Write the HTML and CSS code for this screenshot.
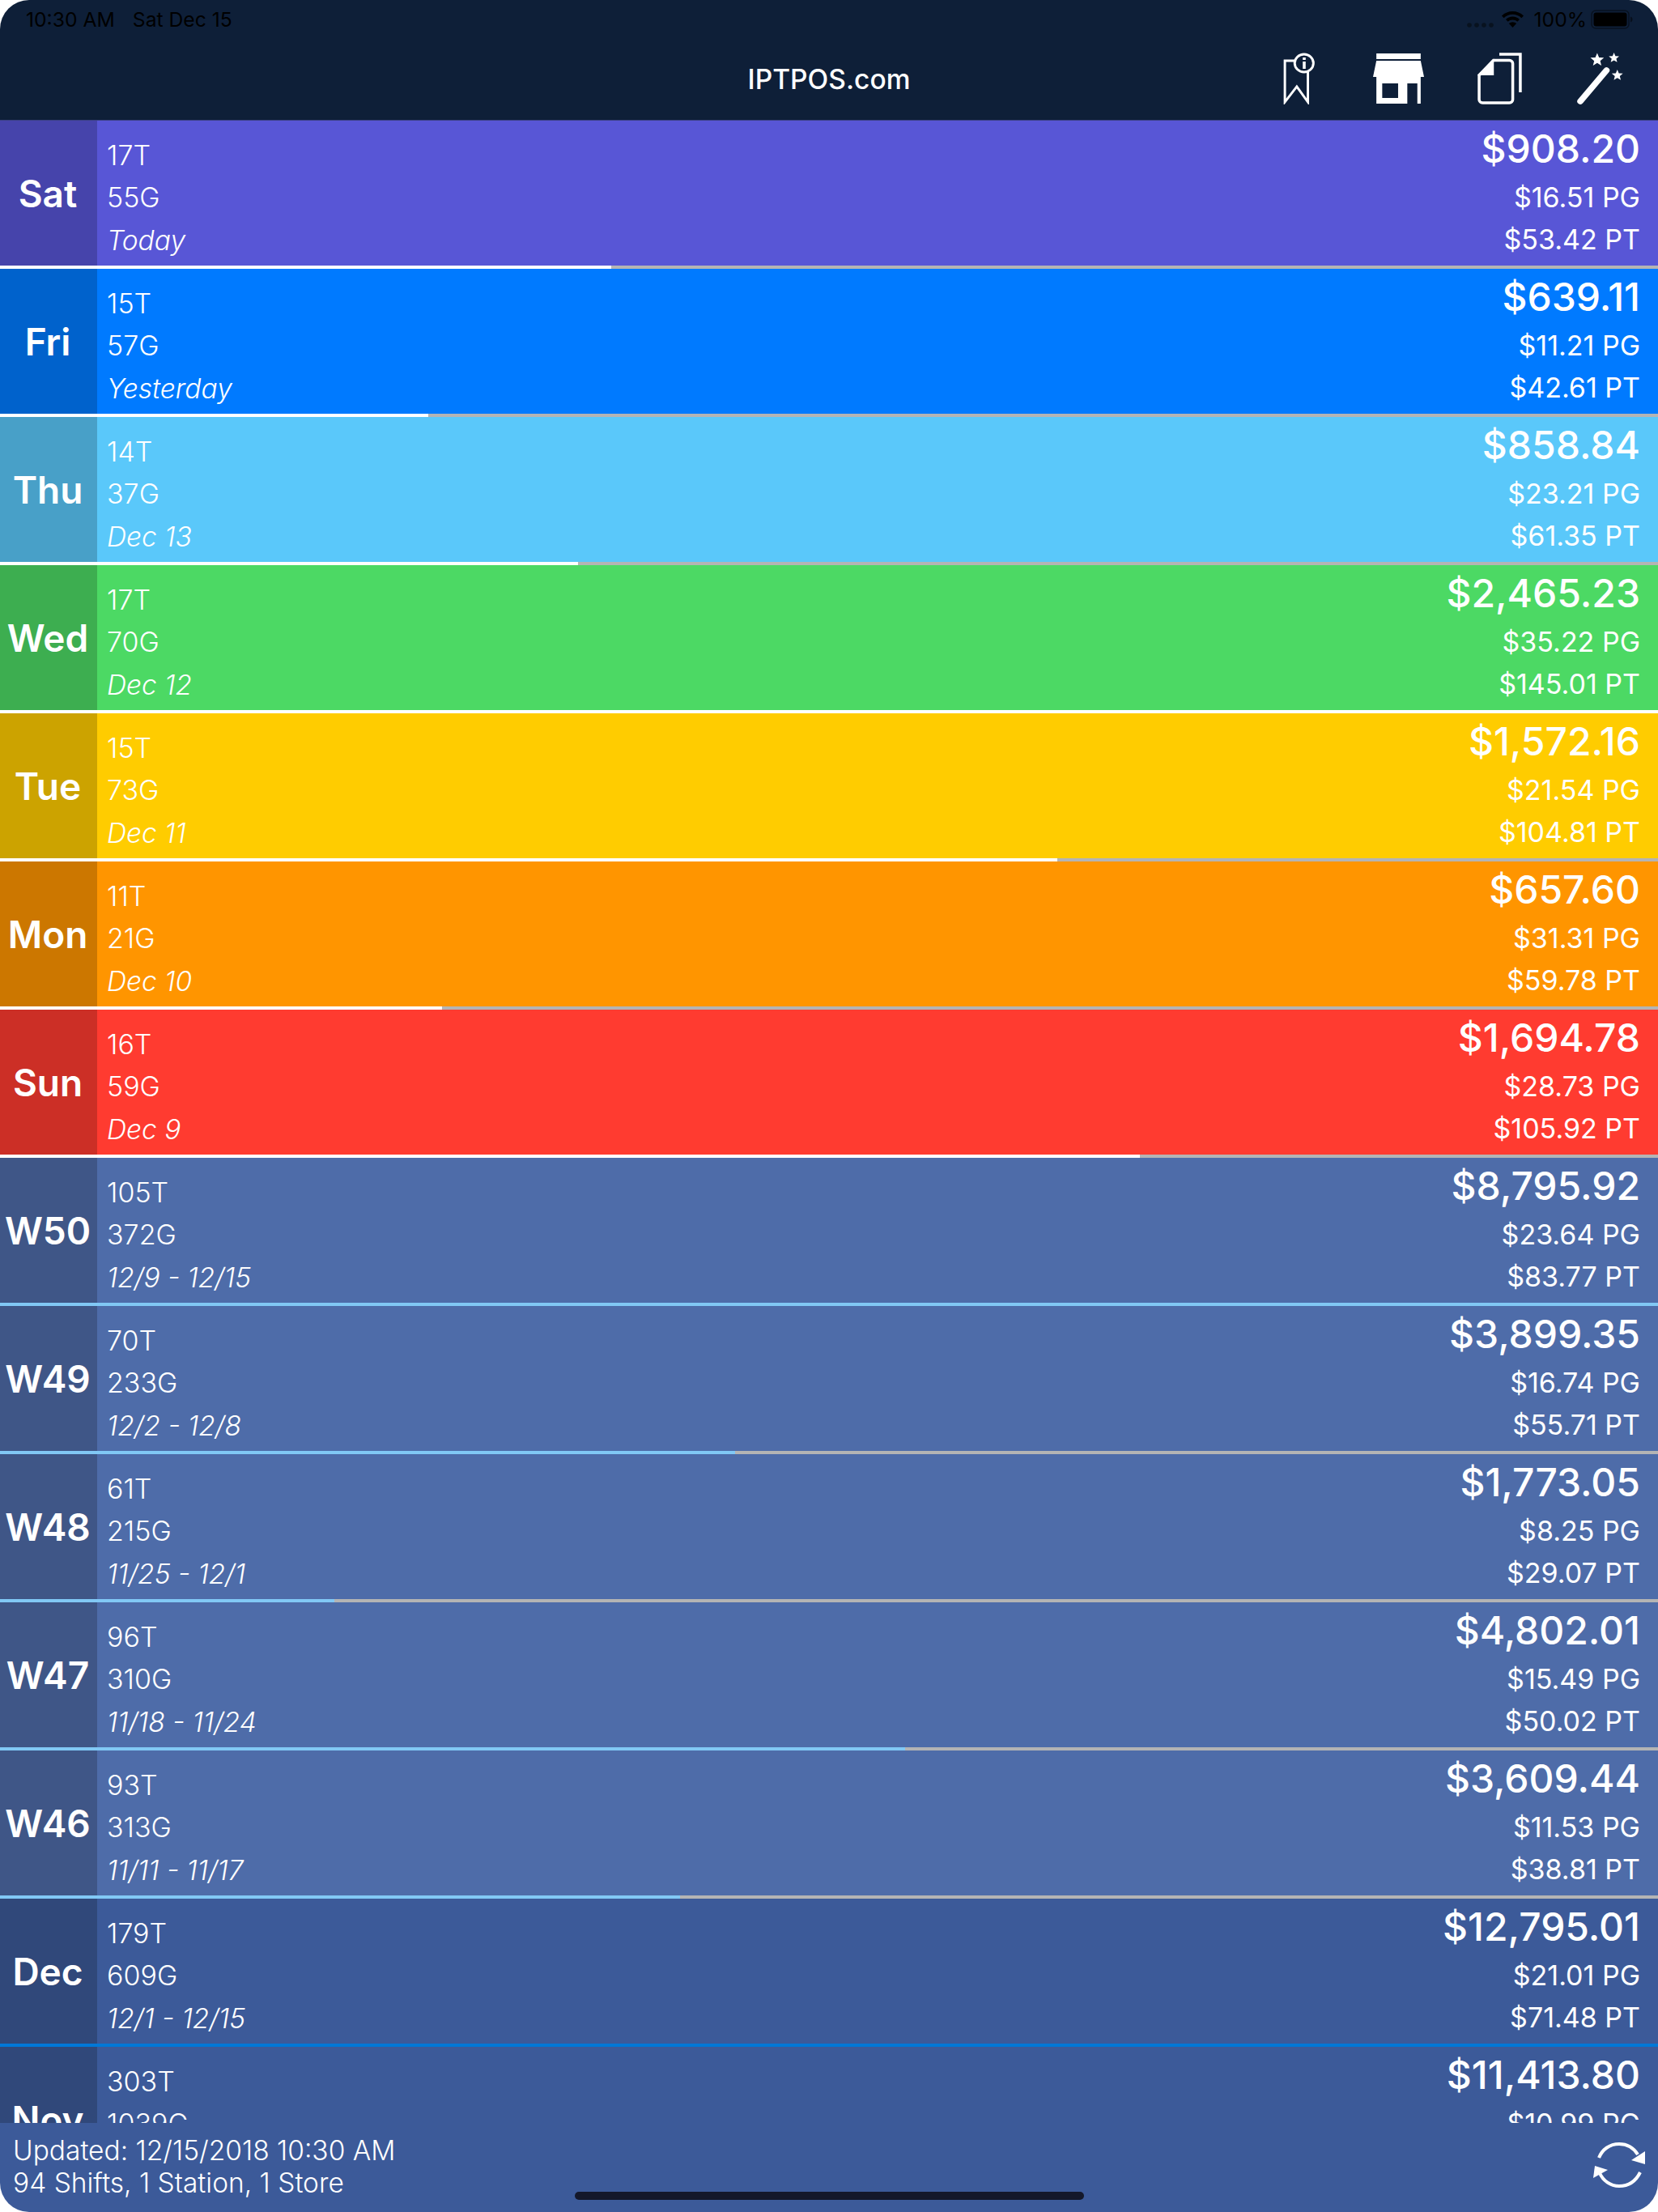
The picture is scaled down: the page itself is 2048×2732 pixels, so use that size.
FILE: index.html
```html
<!DOCTYPE html>
<html>
<head>
    <meta charset="UTF-8">
    <title>IPTPOS.com</title>
    <link rel="stylesheet" href="styles.css">
</head>
<body>
<div class="app">
    <div class="top">
        <div class="status">
            <span class="status-time">10:30 AM</span>
            <span class="status-date">Sat Dec 15</span>
            <span class="status-right">
                <svg class="status-dots" width="33" height="6" viewBox="0 0 33 6"><circle cx="3" cy="3" r="2.800"/><circle cx="12" cy="3" r="2.800"/><circle cx="21" cy="3" r="2.800"/><circle cx="30" cy="3" r="2.800"/></svg>
                <svg width="27" height="20" viewBox="0 0 27 20"><path d="M13.5 0C8.3 0 3.7 2 0 5.400l2.600 2.800C5.500 5.500 9.300 3.800 13.500 3.800s8 1.700 10.900 4.400L27 5.400C23.300 2 18.700 0 13.500 0z"/><path d="M13.500 6.600c-3.300 0-6.300 1.300-8.500 3.400l2.700 2.800c1.500-1.400 3.500-2.300 5.800-2.300s4.300.9 5.800 2.300L22 10c-2.200-2.100-5.200-3.400-8.500-3.400z"/><path d="M13.500 13.200c-1.800 0-3.400.7-4.600 1.800l4.600 5 4.600-5c-1.200-1.100-2.800-1.800-4.600-1.800z"/></svg>
                <span class="status-pct">100%</span>
                <svg width="52" height="24" viewBox="0 0 52 24"><rect x="1" y="1" width="46" height="22" rx="5" fill="none" stroke="#000" stroke-opacity=".45" stroke-width="1.500"/><rect x="3.500" y="3.500" width="41" height="17" rx="3"/><path d="M49 8.500c1.500.4 2.500 1.800 2.500 3.500s-1 3.100-2.500 3.500z" fill-opacity=".5"/></svg>
            </span>
        </div>
        <div class="nav">
            <div></div>
            <div class="nav-title">IPTPOS.com</div>
            <div class="nav-icons">
                <svg class="icon-bookmark" width="40" height="64" viewBox="0 0 38 64" preserveAspectRatio="none" fill="none" stroke="#fff" stroke-width="2.800">
                    <path d="M15 10H2v51l14-19 13 19V24"/>
                    <circle cx="24.500" cy="13" r="11"/>
                    <rect class="solid" x="23" y="11" width="3.400" height="9"/>
                    <rect class="solid" x="23" y="6" width="3.400" height="3"/>
                </svg>
                <svg class="icon-store" width="63" height="63" viewBox="0 0 61 63" preserveAspectRatio="none">
                    <rect x="4" y="1" width="53" height="7" fill="#fff"/>
                    <path fill="#fff" fill-rule="evenodd" d="M4 10H57L61 30H57V63H4V30H0zM11 38V56H30V38z"/>
                    <rect x="41" y="38" width="12" height="25" fill="#0e1f38"/>
                </svg>
                <svg class="icon-doc" width="55" height="64" viewBox="0 0 53 64" preserveAspectRatio="none" fill="none" stroke="#fff" stroke-width="3.400">
                    <path d="M26 2H51V49"/>
                    <path d="M19 9.500H38a4 4 0 0 1 4 4V58a4 4 0 0 1-4 4H6a4 4 0 0 1-4-4V28z"/>
                    <path d="M18.500 10V27H2z" fill="#fff" stroke-width="2"/>
                </svg>
                <svg class="icon-wand" width="58" height="64" viewBox="0 0 56 64" preserveAspectRatio="none">
                    <defs><polygon id="star" points="0,-1 .26,-.36 .95,-.31 .42,.14 .59,.81 0,.45 -.59,.81 -.42,.14 -.95,-.31 -.26,-.36"/></defs>
                    <path d="M5 60L36 22" stroke="#fff" stroke-width="7.500" stroke-linecap="round"/>
                    <use href="#star" fill="#fff" transform="translate(25 9) scale(8.500)"/>
                    <use href="#star" fill="#fff" transform="translate(45 6.500) scale(6.500)"/>
                    <use href="#star" fill="#fff" transform="translate(49 28) scale(7)"/>
                </svg>
            </div>
        </div>
    </div>

    <div class="list">
        <div class="row c-purple">
            <div class="row-label">Sat</div>
            <div class="row-left"><div>17T</div><div>55G</div><div class="note">Today</div></div>
            <div class="row-right"><div class="total">$908.20</div><div>$16.51 PG</div><div>$53.42 PT</div></div>
            <div class="bar"><div class="fill" style="width: 755px"></div></div>
        </div>
        <div class="row c-blue">
            <div class="row-label">Fri</div>
            <div class="row-left"><div>15T</div><div>57G</div><div class="note">Yesterday</div></div>
            <div class="row-right"><div class="total">$639.11</div><div>$11.21 PG</div><div>$42.61 PT</div></div>
            <div class="bar"><div class="fill" style="width: 529px"></div></div>
        </div>
        <div class="row c-sky">
            <div class="row-label">Thu</div>
            <div class="row-left"><div>14T</div><div>37G</div><div class="note">Dec 13</div></div>
            <div class="row-right"><div class="total">$858.84</div><div>$23.21 PG</div><div>$61.35 PT</div></div>
            <div class="bar"><div class="fill" style="width: 714px"></div></div>
        </div>
        <div class="row c-green">
            <div class="row-label">Wed</div>
            <div class="row-left"><div>17T</div><div>70G</div><div class="note">Dec 12</div></div>
            <div class="row-right"><div class="total">$2,465.23</div><div>$35.22 PG</div><div>$145.01 PT</div></div>
            <div class="bar"><div class="fill" style="width: 2048px"></div></div>
        </div>
        <div class="row c-yellow">
            <div class="row-label">Tue</div>
            <div class="row-left"><div>15T</div><div>73G</div><div class="note">Dec 11</div></div>
            <div class="row-right"><div class="total">$1,572.16</div><div>$21.54 PG</div><div>$104.81 PT</div></div>
            <div class="bar"><div class="fill" style="width: 1306px"></div></div>
        </div>
        <div class="row c-orange">
            <div class="row-label">Mon</div>
            <div class="row-left"><div>11T</div><div>21G</div><div class="note">Dec 10</div></div>
            <div class="row-right"><div class="total">$657.60</div><div>$31.31 PG</div><div>$59.78 PT</div></div>
            <div class="bar"><div class="fill" style="width: 546px"></div></div>
        </div>
        <div class="row c-red">
            <div class="row-label">Sun</div>
            <div class="row-left"><div>16T</div><div>59G</div><div class="note">Dec 9</div></div>
            <div class="row-right"><div class="total">$1,694.78</div><div>$28.73 PG</div><div>$105.92 PT</div></div>
            <div class="bar"><div class="fill" style="width: 1408px"></div></div>
        </div>
        <div class="row c-week">
            <div class="row-label">W50</div>
            <div class="row-left"><div>105T</div><div>372G</div><div class="note">12/9 - 12/15</div></div>
            <div class="row-right"><div class="total">$8,795.92</div><div>$23.64 PG</div><div>$83.77 PT</div></div>
            <div class="bar"><div class="fill" style="width: 2048px"></div></div>
        </div>
        <div class="row c-week">
            <div class="row-label">W49</div>
            <div class="row-left"><div>70T</div><div>233G</div><div class="note">12/2 - 12/8</div></div>
            <div class="row-right"><div class="total">$3,899.35</div><div>$16.74 PG</div><div>$55.71 PT</div></div>
            <div class="bar"><div class="fill" style="width: 908px"></div></div>
        </div>
        <div class="row c-week">
            <div class="row-label">W48</div>
            <div class="row-left"><div>61T</div><div>215G</div><div class="note">11/25 - 12/1</div></div>
            <div class="row-right"><div class="total">$1,773.05</div><div>$8.25 PG</div><div>$29.07 PT</div></div>
            <div class="bar"><div class="fill" style="width: 413px"></div></div>
        </div>
        <div class="row c-week">
            <div class="row-label">W47</div>
            <div class="row-left"><div>96T</div><div>310G</div><div class="note">11/18 - 11/24</div></div>
            <div class="row-right"><div class="total">$4,802.01</div><div>$15.49 PG</div><div>$50.02 PT</div></div>
            <div class="bar"><div class="fill" style="width: 1118px"></div></div>
        </div>
        <div class="row c-week">
            <div class="row-label">W46</div>
            <div class="row-left"><div>93T</div><div>313G</div><div class="note">11/11 - 11/17</div></div>
            <div class="row-right"><div class="total">$3,609.44</div><div>$11.53 PG</div><div>$38.81 PT</div></div>
            <div class="bar"><div class="fill" style="width: 840px"></div></div>
        </div>
        <div class="row c-month">
            <div class="row-label">Dec</div>
            <div class="row-left"><div>179T</div><div>609G</div><div class="note">12/1 - 12/15</div></div>
            <div class="row-right"><div class="total">$12,795.01</div><div>$21.01 PG</div><div>$71.48 PT</div></div>
            <div class="bar"><div class="fill" style="width: 2048px"></div></div>
        </div>
        <div class="row c-month">
            <div class="row-label">Nov</div>
            <div class="row-left"><div>303T</div><div>1039G</div><div class="note">11/1 - 11/30</div></div>
            <div class="row-right"><div class="total">$11,413.80</div><div>$10.99 PG</div><div>$37.67 PT</div></div>
            <div class="bar"><div class="fill" style="width: 2048px"></div></div>
        </div>
    </div>

    <div class="footer">
        <div class="footer-text">
            <div>Updated: 12/15/2018 10:30 AM</div>
            <div>94 Shifts, 1 Station, 1 Store</div>
        </div>
        <svg class="refresh" width="64" height="56" viewBox="0 0 64 56" fill="none" stroke="#fff" stroke-width="4">
            <path d="M7 19C11 9 20 2 32 2c10 0 18 5 23 13"/>
            <path d="M58 37C53 47 44 54 32 54 21 54 12 47 8 38"/>
            <polygon points="64,11 64,27 47,22" fill="#fff" stroke="none"/>
            <polygon points="0,44 2,29 18,34" fill="#fff" stroke="none"/>
        </svg>
        <div class="home-bar"></div>
    </div>
</div>
</body>
</html>
```

FILE: styles.css
```css
html, body { margin: 0; padding: 0; background: #fff; }
body { font-family: Inter, "Liberation Sans", sans-serif; color: #fff; }

.app { position: relative; width: 2048px; height: 2732px; display: flex; flex-direction: column; overflow: hidden; border-radius: 36px; }

.top { height: 148px; flex: none; background: #0e1f38; border-bottom: 1px solid #3a3f80; }
.status { height: 48px; display: flex; align-items: center; padding: 0 31px 0 32px; font-size: 24.700px; color: #000; }
.status-time { margin-right: 22px; }
.status-right { margin-left: auto; display: flex; align-items: center; }
.status-right svg { display: block; }
.status-dots { margin: 14px 10px 0 0; fill: #08121f; }
.status-pct { margin: 0 5px 0 13px; }

.nav { height: 100px; display: grid; grid-template-columns: 1fr auto 1fr; }
.nav-title { font-size: 33.500px; font-weight: 500; line-height: 100px; }
.nav-icons { display: flex; justify-content: flex-end; padding: 17px 43px 0 0; }
.nav-icons svg { display: block; }
.solid { fill: #fff; stroke: none; }
.icon-bookmark { margin-right: 71px; }
.icon-store { margin-right: 66px; }
.icon-doc { margin-right: 67px; }

.list { flex: 1; min-height: 0; overflow: hidden; }

.row { position: relative; height: 179px; padding-bottom: 4px; display: flex; background: var(--bg); }
.row-label { width: 118px; padding-right: 2px; flex: none; display: flex; align-items: center; justify-content: center; background: var(--side); font-size: 46px; font-weight: 600; }
.row-left { flex: 1; padding: 17px 0 0 12px; font-size: 34px; line-height: 52.300px; font-weight: 300; }
.row-right { padding: 1px 22px 0 0; text-align: right; font-size: 34px; line-height: 52.300px; }
.note { font-style: italic; font-size: 33.500px; }
.total { font-size: 48px; font-weight: 500; line-height: 68px; }

.bar { position: absolute; left: 0; right: 0; bottom: 0; height: 4px; background: #b4b4b4; }
.fill { height: 4px; background: var(--line); }

.c-purple { --bg: #5856d6; --side: #4644ab; --line: #fff; }
.c-blue { --bg: #007aff; --side: #0062cc; --line: #fff; }
.c-sky { --bg: #5ac8fa; --side: #48a0c8; --line: #fff; }
.c-green { --bg: #4cd964; --side: #3dae50; --line: #fff; }
.c-yellow { --bg: #ffcc00; --side: #cca300; --line: #fff; }
.c-orange { --bg: #ff9500; --side: #cc7700; --line: #fff; }
.c-red { --bg: #ff3b30; --side: #cc2f26; --line: #fff; }
.c-week { --bg: #4e6ca9; --side: #3f5687; --line: #81c8f5; }
.c-month { --bg: #3c5a99; --side: #30487a; --line: #0078d7; }

.footer { position: relative; height: 110px; flex: none; display: flex; justify-content: space-between; background: #3c5a99; padding: 14px 16px 0 16px; box-sizing: border-box; }
.footer-text { font-size: 33.500px; line-height: 40px; font-weight: 300; }
.refresh { display: block; margin-top: 10px; }
.home-bar { position: absolute; left: 710px; bottom: 15px; width: 629px; height: 10px; border-radius: 5px; background: #14182a; }
```
